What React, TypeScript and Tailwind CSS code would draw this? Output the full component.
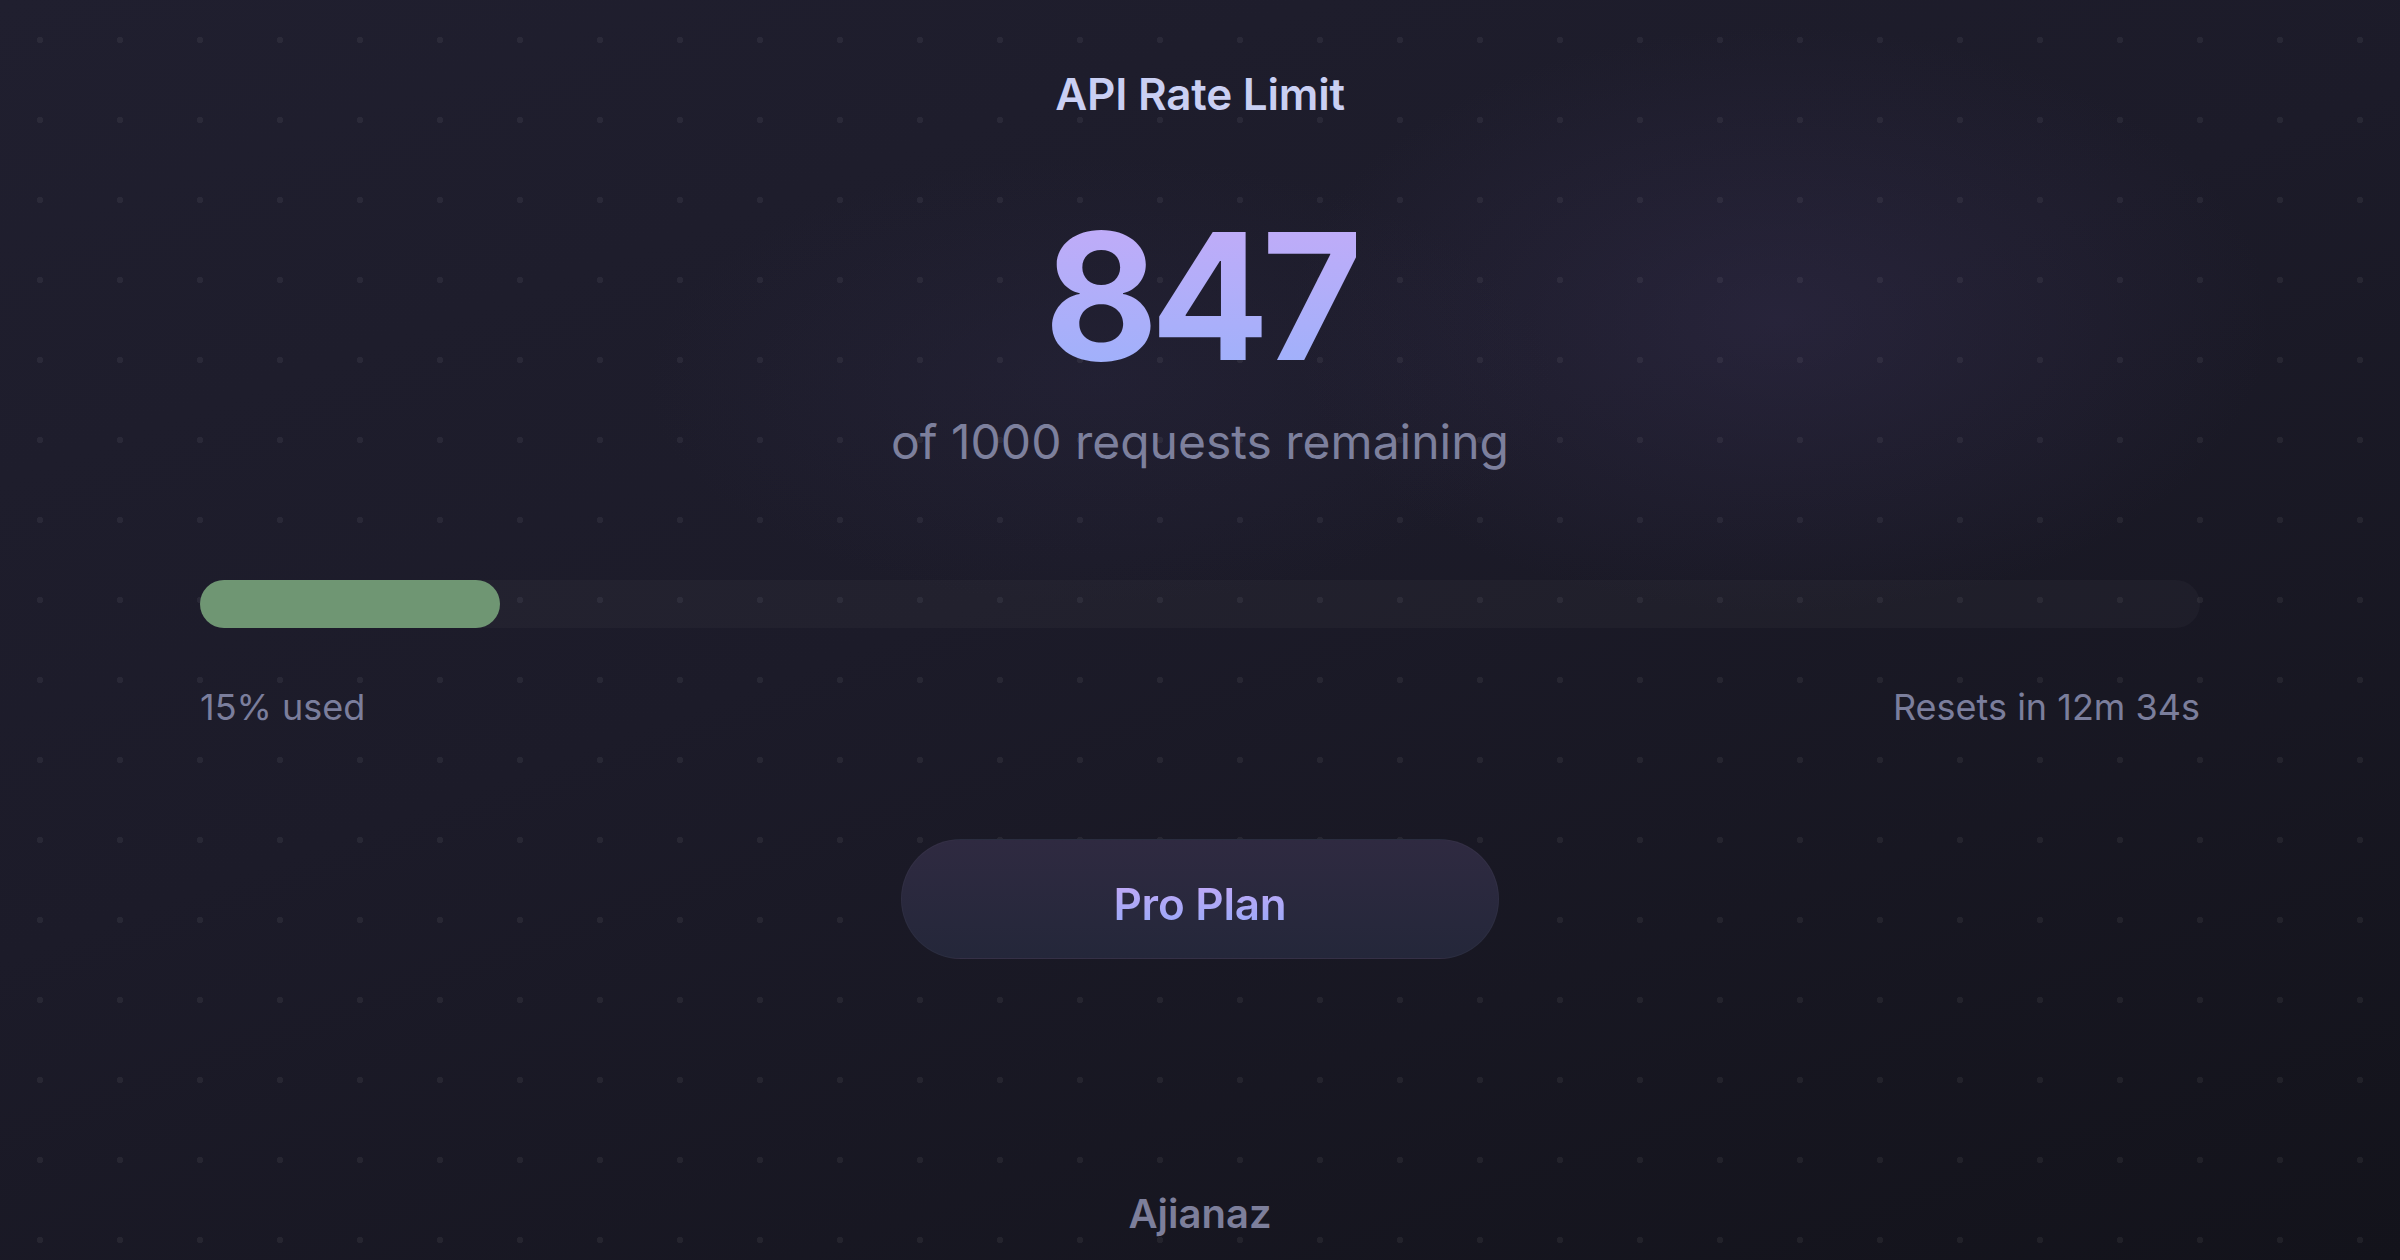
export default function App() {
  const used = 15

  return (
    <div className="relative h-[1260px] w-full overflow-hidden bg-[linear-gradient(160deg,#201f2f_0%,#1c1b29_45%,#13131b_100%)] font-['Inter',sans-serif]">
      {/* glows + dot grid */}
      <div className="pointer-events-none absolute inset-0 bg-[radial-gradient(ellipse_700px_420px_at_1780px_320px,rgba(60,52,90,0.35),transparent_70%)]" />
      <div className="pointer-events-none absolute inset-0 bg-[radial-gradient(ellipse_650px_320px_at_1100px_380px,rgba(50,46,78,0.25),transparent_70%)]" />
      <div className="pointer-events-none absolute inset-0 bg-[radial-gradient(circle,rgba(255,255,255,0.055)_3px,transparent_3.5px)] bg-[size:80px_80px]" />

      <main className="relative flex h-full flex-col items-center px-[200px] pt-[72px]">
        <h1 className="text-[44px] font-semibold leading-none tracking-[-0.005em] text-[#c9cff3]">
          API Rate Limit
        </h1>

        <div className="mt-[92px] bg-[linear-gradient(180deg,#c4abf8_0%,#9cb1fb_100%)] bg-clip-text text-[176px] font-bold leading-none tracking-[-0.045em] text-transparent">
          847
        </div>

        <p className="mt-[34px] text-[48px] leading-none text-[#7d809d]">
          of 1000 requests remaining
        </p>

        <div className="mt-[114px] h-[48px] w-full rounded-full bg-[rgba(255,255,255,0.028)]">
          <div
            className="h-full rounded-full bg-[#6f9673]"
            style={{ width: `${used}%` }}
          />
        </div>

        <div className="mt-[61px] flex w-full justify-between text-[36px] leading-none text-[#7b7e9c]">
          <span>{used}% used</span>
          <span>Resets in 12m 34s</span>
        </div>

        <button className="mt-[114px] flex h-[120px] w-[598px] items-center justify-center rounded-full border border-white/[0.03] bg-[linear-gradient(180deg,#2f2a41_0%,#24273a_100%)] pt-[10px]">
          <span className="bg-[linear-gradient(180deg,#c2a8f6_0%,#99a9f9_100%)] bg-clip-text text-[44px] font-semibold leading-none tracking-[-0.005em] text-transparent">
            Pro Plan
          </span>
        </button>

        <footer className="mt-[235px] text-[40px] font-semibold leading-none text-[#7d7f9b]">
          Ajianaz
        </footer>
      </main>
    </div>
  )
}
